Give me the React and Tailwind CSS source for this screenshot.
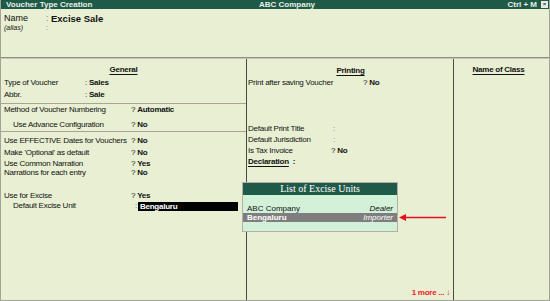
const font = { fontFamily: '"Liberation Sans", Arial, sans-serif' };

function QRow({ label, value, h = "h-[11px] leading-[11px]", mt = "", labelW = "w-[127px]", indent = "", mark = "?" }) {
  return (
    <div className={`flex ${h} ${mt}`}>
      <div className={`${labelW} ${indent} shrink-0`}>{label}</div>
      <div>
        {mark} <span className="font-bold">{value}</span>
      </div>
    </div>
  );
}

const App = () => {
  return (
    <div
      className="relative w-[550px] h-[301px] bg-[#e8efd3] text-[#111] overflow-hidden border-x border-b border-[#a3a39a] flex flex-col"
      style={font}
    >
      {/* title bar */}
      <div className="flex items-center h-[9px] bg-[#1f5a49] text-[#e8f0e4] text-[8px] font-bold leading-[9px] shrink-0">
        <div className="w-[258px] pl-[5px]">Voucher Type Creation</div>
        <div>ABC Company</div>
        <div className="ml-auto flex items-center gap-[4px] pr-[1px]">
          <span>Ctrl + M</span>
          <span className="w-[7px] h-[7px] bg-[#e8ece8] text-[#333] text-[6px] leading-[7px] text-center">×</span>
        </div>
      </div>

      {/* header */}
      <div className="h-[48px] pl-[3px] pt-[4px] shrink-0">
        <div className="flex items-center h-[11px] leading-[11px]">
          <span className="w-[42px] text-[9px]">Name</span>
          <span className="text-[9px] text-[#888] w-[5px]">:</span>
          <span className="text-[9.5px] font-bold">Excise Sale</span>
        </div>
        <div className="flex items-center h-[8px] leading-[8px]">
          <span className="w-[42px] text-[7px] italic">(alias)</span>
          <span className="text-[8px] text-[#888]">:</span>
        </div>
      </div>
      <div className="h-[1px] bg-[#8f8f80] shrink-0" />
      <div className="h-[1px] bg-[#c6c6b6] shrink-0" />

      {/* body */}
      <div className="flex flex-1 text-[8px] tracking-[-0.25px]">
        {/* General */}
        <div className="w-[246px] border-r border-[#4a4a40] flex flex-col">
          <div className="mt-[5px] h-[12px] leading-[12px] text-center font-bold">
            <span className="underline underline-offset-2">General</span>
          </div>
          <div className="pl-[3px]">
            <QRow label="Type of Voucher" value="Sales" mark=":" labelW="w-[81px]" h="h-[12px] leading-[12px]" mt="mt-[1px]" />
            <QRow label="Abbr." value="Sale" mark=":" labelW="w-[81px]" h="h-[12px] leading-[12px]" />
          </div>
          <div className="mt-[2px] h-[1px] bg-[#a8a690]" />
          <div className="pl-[3px]">
            <QRow label="Method of Voucher Numbering" value="Automatic" h="h-[12px] leading-[12px]" />
            <QRow label="Use Advance Configuration" value="No" indent="pl-[9px]" h="h-[12px] leading-[12px]" mt="mt-[3px]" />
          </div>
          <div className="h-[1px] bg-[#a8a690]" />
          <div className="pl-[3px]">
            <QRow label="Use EFFECTIVE Dates for Vouchers" value="No" mt="mt-[3px]" />
            <QRow label="Make 'Optional' as default" value="No" mt="mt-[1px]" />
            <QRow label="Use Common Narration" value="Yes" h="h-[9px] leading-[9px]" mt="mt-[1px]" />
            <QRow label="Narrations for each entry" value="No" h="h-[9px] leading-[9px]" />
            <QRow label="Use for Excise" value="Yes" h="h-[10px] leading-[10px]" mt="mt-[14px]" />
            <div className="flex items-center h-[10px]">
              <div className="w-[131px] pl-[9px] shrink-0">Default Excise Unit</div>
              <span className="text-[#666]">:</span>
              <div className="ml-[1px] w-[100px] h-[9px] leading-[9px] bg-black text-white font-bold pl-[2px]">
                Bengaluru
              </div>
            </div>
          </div>
        </div>

        {/* Printing */}
        <div className="w-[207px] border-r border-[#4a4a40] flex flex-col pl-[1px]">
          <div className="mt-[6px] h-[12px] leading-[12px] text-center font-bold">
            <span className="underline underline-offset-2">Printing</span>
          </div>
          <QRow label="Print after saving Voucher" value="No" labelW="w-[115px]" h="h-[12px] leading-[12px]" />
          <div className="mt-[34px] flex h-[11px] leading-[11px]">
            <div className="w-[85px]">Default Print Title</div>
            <span className="text-[#777]">:</span>
          </div>
          <div className="flex h-[11px] leading-[11px]">
            <div className="w-[85px]">Default Jurisdiction</div>
            <span className="text-[#777]">:</span>
          </div>
          <QRow label="Is Tax Invoice" value="No" labelW="w-[83px]" />
          <div className="h-[11px] leading-[11px] font-bold">
            <span className="underline underline-offset-2">Declaration</span>
            <span className="ml-[4px]">:</span>
          </div>
          <div className="mt-auto mb-[2px] pr-[3px] text-right text-[#f0202a] font-bold h-[10px] leading-[10px]">
            1 more ... ↓
          </div>
        </div>

        {/* Name of Class */}
        <div className="flex-1">
          <div className="mt-[5px] h-[12px] leading-[12px] text-center font-bold pr-[6px]">
            <span className="underline underline-offset-2">Name of Class</span>
          </div>
        </div>
      </div>

      {/* popup list */}
      <div className="absolute left-[241px] top-[182px] w-[156px] h-[50px] bg-[#d3f0d8] border border-[#b5ada6] flex flex-col text-[8px]">
        <div
          className="h-[12px] leading-[12px] bg-[#1f5a49] text-white text-center text-[10px] shrink-0"
          style={{ fontFamily: '"Liberation Serif", "Times New Roman", serif' }}
        >
          List of Excise Units
        </div>
        <div className="mt-[9px] flex justify-between px-[4px] h-[9px] leading-[9px]">
          <span>ABC Company</span>
          <span className="italic">Dealer</span>
        </div>
        <div className="flex justify-between px-[4px] h-[9px] leading-[9px] bg-[#7e7e7e] text-white">
          <span className="font-bold">Bengaluru</span>
          <span className="italic">Importer</span>
        </div>
      </div>

      {/* arrow */}
      <svg className="absolute left-[397px] top-[213px]" width="50" height="9" viewBox="0 0 50 9">
        <line x1="6" y1="4.5" x2="48" y2="4.5" stroke="#e8101c" strokeWidth="1.5" />
        <polygon points="1,4.5 8,1 8,8" fill="#e8101c" />
      </svg>
    </div>
  );
};

export default App;
